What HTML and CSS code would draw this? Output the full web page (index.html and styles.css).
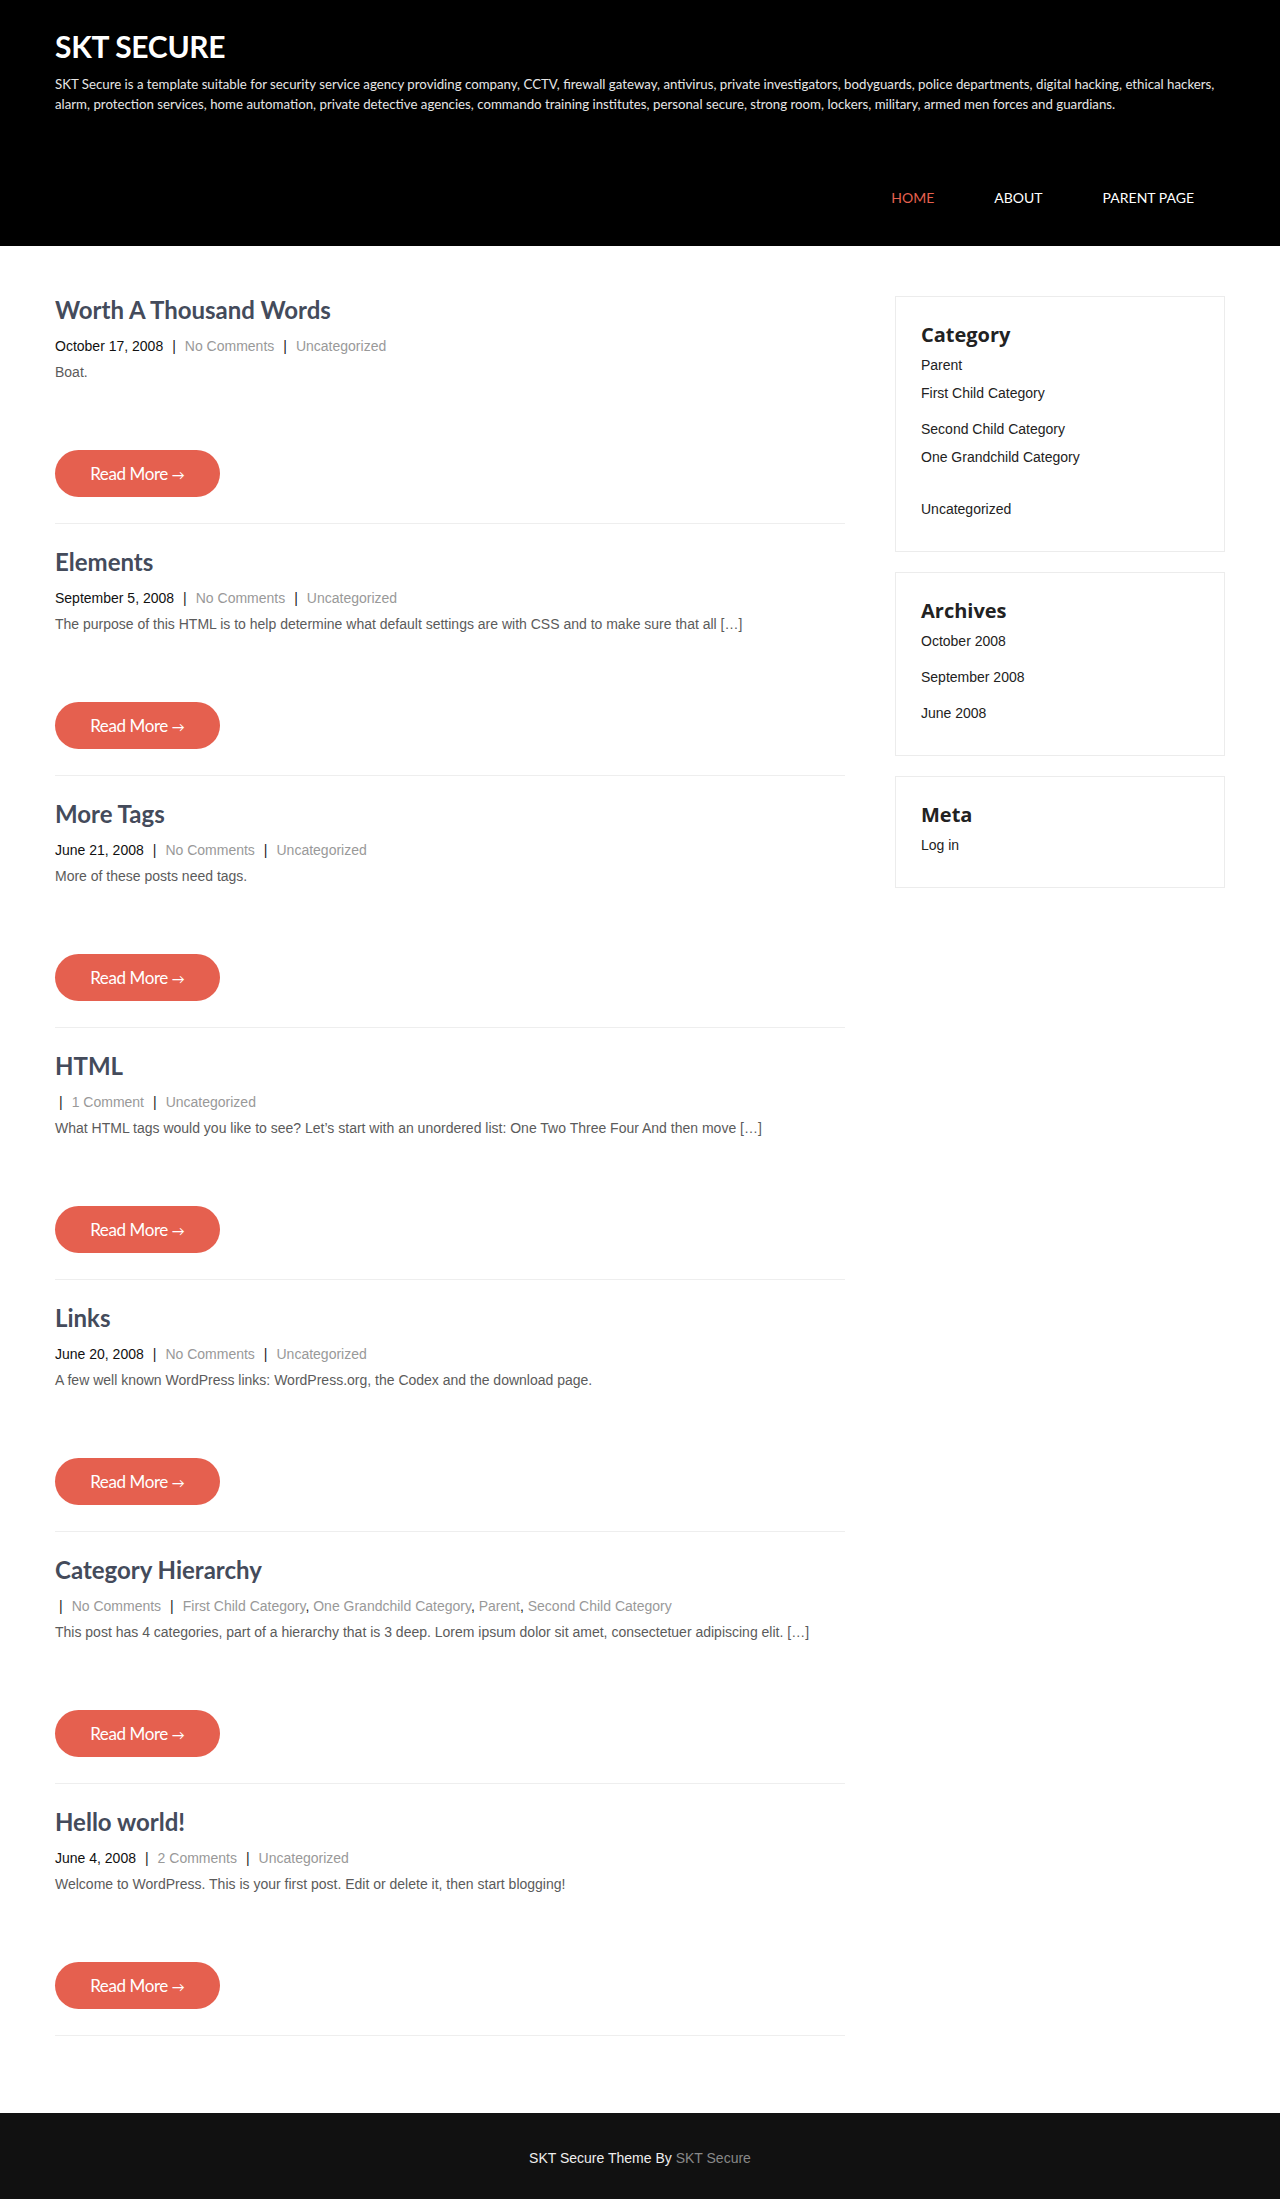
FILE: index.html
```html
<!DOCTYPE html>
<html lang="en">
<head>
<meta charset="utf-8">
<title>SKT Secure</title>
<link rel="stylesheet" href="styles.css">
</head>
<body>
<header class="site-header">
  <div class="container">
    <div class="branding">
      <h1 class="site-title">SKT SECURE</h1>
      <p class="tagline">SKT Secure is a template suitable for security service agency providing company, CCTV, firewall gateway, antivirus, private investigators, bodyguards, police departments, digital hacking, ethical hackers, alarm, protection services, home automation, private detective agencies, commando training institutes, personal secure, strong room, lockers, military, armed men forces and guardians.</p>
    </div>
    <nav class="main-nav">
      <a class="nav-link active" href="#">HOME</a>
      <a class="nav-link" href="#">ABOUT</a>
      <a class="nav-link" href="#">PARENT PAGE</a>
    </nav>
  </div>
</header>

<div class="container content">
  <main class="posts">
    <article class="post">
      <h2 class="post-title"><a href="#">Worth A Thousand Words</a></h2>
      <div class="post-meta"><span class="date">October 17, 2008</span><span class="sep">|</span><a href="#">No Comments</a><span class="sep">|</span><a href="#">Uncategorized</a></div>
      <p class="excerpt">Boat.</p>
      <a class="read-more" href="#">Read More <span class="arrow">→</span></a>
    </article>

    <article class="post">
      <h2 class="post-title"><a href="#">Elements</a></h2>
      <div class="post-meta"><span class="date">September 5, 2008</span><span class="sep">|</span><a href="#">No Comments</a><span class="sep">|</span><a href="#">Uncategorized</a></div>
      <p class="excerpt">The purpose of this HTML is to help determine what default settings are with CSS and to make sure that all […]</p>
      <a class="read-more" href="#">Read More <span class="arrow">→</span></a>
    </article>

    <article class="post">
      <h2 class="post-title"><a href="#">More Tags</a></h2>
      <div class="post-meta"><span class="date">June 21, 2008</span><span class="sep">|</span><a href="#">No Comments</a><span class="sep">|</span><a href="#">Uncategorized</a></div>
      <p class="excerpt">More of these posts need tags.</p>
      <a class="read-more" href="#">Read More <span class="arrow">→</span></a>
    </article>

    <article class="post">
      <h2 class="post-title"><a href="#">HTML</a></h2>
      <div class="post-meta"><span class="sep lead">|</span><a href="#">1 Comment</a><span class="sep">|</span><a href="#">Uncategorized</a></div>
      <p class="excerpt">What HTML tags would you like to see? Let’s start with an unordered list: One Two Three Four And then move […]</p>
      <a class="read-more" href="#">Read More <span class="arrow">→</span></a>
    </article>

    <article class="post">
      <h2 class="post-title"><a href="#">Links</a></h2>
      <div class="post-meta"><span class="date">June 20, 2008</span><span class="sep">|</span><a href="#">No Comments</a><span class="sep">|</span><a href="#">Uncategorized</a></div>
      <p class="excerpt">A few well known WordPress links: WordPress.org, the Codex and the download page.</p>
      <a class="read-more" href="#">Read More <span class="arrow">→</span></a>
    </article>

    <article class="post">
      <h2 class="post-title"><a href="#">Category Hierarchy</a></h2>
      <div class="post-meta"><span class="sep lead">|</span><a href="#">No Comments</a><span class="sep">|</span><a href="#">First Child Category</a>, <a href="#">One Grandchild Category</a>, <a href="#">Parent</a>, <a href="#">Second Child Category</a></div>
      <p class="excerpt">This post has 4 categories, part of a hierarchy that is 3 deep. Lorem ipsum dolor sit amet, consectetuer adipiscing elit. […]</p>
      <a class="read-more" href="#">Read More <span class="arrow">→</span></a>
    </article>

    <article class="post">
      <h2 class="post-title"><a href="#">Hello world!</a></h2>
      <div class="post-meta"><span class="date">June 4, 2008</span><span class="sep">|</span><a href="#">2 Comments</a><span class="sep">|</span><a href="#">Uncategorized</a></div>
      <p class="excerpt">Welcome to WordPress. This is your first post. Edit or delete it, then start blogging!</p>
      <a class="read-more" href="#">Read More <span class="arrow">→</span></a>
    </article>
  </main>

  <aside class="sidebar">
    <section class="widget">
      <h3 class="widget-title">Category</h3>
      <ul>
        <li><a href="#">Parent</a>
          <ul>
            <li><a href="#">First Child Category</a></li>
            <li><a href="#">Second Child Category</a>
              <ul>
                <li><a href="#">One Grandchild Category</a></li>
              </ul>
            </li>
          </ul>
        </li>
        <li><a href="#">Uncategorized</a></li>
      </ul>
    </section>
    <section class="widget">
      <h3 class="widget-title">Archives</h3>
      <ul>
        <li><a href="#">October 2008</a></li>
        <li><a href="#">September 2008</a></li>
        <li><a href="#">June 2008</a></li>
      </ul>
    </section>
    <section class="widget">
      <h3 class="widget-title">Meta</h3>
      <ul>
        <li><a href="#">Log in</a></li>
      </ul>
    </section>
  </aside>
</div>

<footer class="site-footer">
  <p class="copyright">SKT Secure Theme By <a href="#">SKT Secure</a></p>
</footer>
</body>
</html>
```

FILE: styles.css
```css
* { box-sizing: border-box; }
html, body { margin: 0; padding: 0; }
body {
  background: #fff;
  font-family: "Liberation Sans", Arial, sans-serif;
  font-size: 14px;
  color: #555;
}
a { text-decoration: none; color: inherit; }

.container {
  width: 1170px;
  margin: 0 auto;
}

/* Header */
.site-header {
  background: #000;
  padding-bottom: 38px;
}
.branding { padding-top: 28px; }
.site-title {
  margin: 0;
  font-family: Lato, sans-serif;
  font-weight: 700;
  font-size: 30px;
  line-height: 36px;
  color: #fff;
  letter-spacing: -0.3px;
}
.tagline {
  margin: 10px 0 0;
  font-family: Lato, sans-serif;
  font-size: 13.25px;
  line-height: 20px;
  color: #e6e6e6;
}
.main-nav {
  margin-top: 74px;
  display: flex;
  justify-content: flex-end;
}
.nav-link {
  font-family: Lato, sans-serif;
  font-size: 14px;
  line-height: 20px;
  color: #fff;
  padding: 0 30px;
}
.nav-link:last-child { padding-right: 31px; }
.nav-link.active { color: #e5604f; }

/* Content */
.content {
  display: grid;
  grid-template-columns: 1fr 330px;
  column-gap: 50px;
  padding-top: 49px;
  padding-bottom: 54px;
  align-items: start;
}
.post {
  border-bottom: 1px solid #eeeeee;
  padding-bottom: 26px;
  margin-bottom: 23px;
}
.post-title {
  margin: 0;
  font-family: Lato, sans-serif;
  font-weight: 700;
  font-size: 24px;
  line-height: 30px;
  color: #444b5b;
}
.post-meta {
  margin-top: 9px;
  line-height: 24px;
  color: #222;
}
.post-meta a { color: #999; }
.post-meta .date { color: #111; }
.sep { padding: 0 9px; color: #222; }
.sep.lead { padding-left: 4px; }
.excerpt {
  margin: 2px 0 0;
  line-height: 24px;
  color: #5b5b5b;
}
.read-more {
  display: block;
  margin-top: 66px;
  width: 165px;
  height: 47px;
  border-radius: 24px;
  background: #e5604f;
  color: #fff;
  text-align: center;
  font-family: Lato, sans-serif;
  font-size: 17px;
  letter-spacing: -0.4px;
  line-height: 47px;
}
.arrow { font-size: 13px; letter-spacing: 0; }

/* Sidebar */
.sidebar { margin-top: 1px; }
.widget {
  border: 1px solid #ececec;
  padding: 24px 25px 20px;
  margin-bottom: 20px;
}
.widget-title {
  margin: 0 0 2px;
  font-family: "Open Sans", sans-serif;
  font-weight: 700;
  font-size: 20px;
  line-height: 28px;
  color: #222;
}
.widget ul { list-style: none; margin: 0; padding: 0; }
.widget li {
  line-height: 28px;
  padding-bottom: 8px;
  color: #222;
}

/* Footer */
.site-footer {
  background: #111;
  height: 86px;
  padding-top: 35px;
}
.copyright {
  margin: 0;
  text-align: center;
  line-height: 20px;
  color: #eee;
}
.copyright a { color: #888; }
```
